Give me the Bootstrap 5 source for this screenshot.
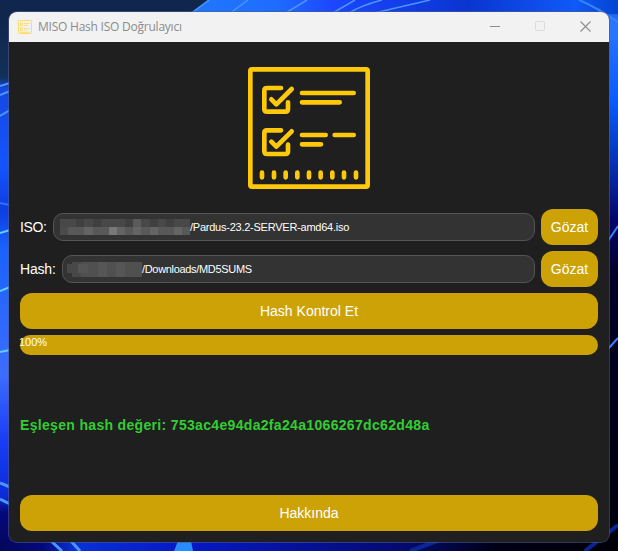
<!DOCTYPE html>
<html lang="tr">
<head>
<meta charset="utf-8">
<meta name="viewport" content="width=device-width, initial-scale=1">
<title>MISO Hash ISO Doğrulayıcı</title>
<link href="https://cdn.jsdelivr.net/npm/bootstrap@5.3.0/dist/css/bootstrap.min.css" rel="stylesheet">
<style>
  body { width: 618px; height: 551px; background: #02063a; font-family: "Liberation Sans", Arial, sans-serif; font-size: 14px; line-height: 1; padding: 12px 9px 9px; }
  .wallpaper { z-index: 0; }
  .app-window { z-index: 1; width: 600px; height: 530px; background: #1f1f1f; border-radius: 8px; box-shadow: 0 0 0 1px rgba(80,90,130,.6); }
  .title-bar { height: 30px; background: #f2f2f2; color: #8c8c8c; font-family: "Open Sans", "Noto Sans", sans-serif; font-size: 12px; padding-left: 9px; padding-right: 18px; }
  .title-group { gap: 6px; }
  .title-text { letter-spacing: -.23px; }
  .win-controls { gap: 35px; }
  .content { padding: 25px 11px 11px; }
  .logo { margin-bottom: 20px; }
  .form-line { gap: 6px; height: 36px; margin-bottom: 6px; color: #fff; }
  .iso-label { width: 27px; letter-spacing: -.35px; }
  .hash-label { width: 36px; letter-spacing: -.2px; }
  .path-box { height: 28px; background: #333; border: 1px solid #555; border-radius: 10px; color: #fff; font-size: 11px; }
  .iso-path { letter-spacing: -.24px; }
  .hash-path { letter-spacing: -.32px; }
  .gold-btn, .gold-btn:hover { height: 36px; background: #cca207; border: 0; border-radius: 12px; color: #fff; font-size: 14px; line-height: 1; padding: 0; }
  .browse { width: 57px; }
  .gold-progress { height: 20px; margin-top: 6px; border-radius: 10px; background: #cca207; color: #fff; font-size: 11px; padding-top: 2px; }
  .percent { margin-left: -1px; }
  .result { color: #32cd32; font-size: 14px; }
  .result-text { letter-spacing: .325px; }
</style>
</head>
<body class="position-relative overflow-hidden">
<svg class="wallpaper position-absolute top-0 start-0" width="618" height="551" viewBox="0 0 618 551" aria-hidden="true">
  <defs>
    <linearGradient id="leftGlow" x1="0" y1="0" x2="0" y2="1">
      <stop offset="0" stop-color="#102349"/><stop offset=".14" stop-color="#123058"/><stop offset=".16" stop-color="#1448e0"/>
      <stop offset=".3" stop-color="#1554ff"/><stop offset=".38" stop-color="#0c3de0"/><stop offset=".45" stop-color="#1a62ff"/>
      <stop offset=".68" stop-color="#3c6dff"/><stop offset=".8" stop-color="#1a3cf6"/><stop offset=".9" stop-color="#0a2cd8"/><stop offset=".93" stop-color="#04087c"/><stop offset="1" stop-color="#04065c"/>
    </linearGradient>
    <linearGradient id="rightGlow" x1="0" y1="0" x2="0" y2="1">
      <stop offset="0" stop-color="#0444c8"/><stop offset=".04" stop-color="#2c74ff"/><stop offset=".18" stop-color="#0a5cff"/>
      <stop offset=".3" stop-color="#0530b0"/><stop offset=".4" stop-color="#04056a"/><stop offset=".5" stop-color="#010128"/><stop offset="1" stop-color="#00000a"/>
    </linearGradient>
    <linearGradient id="topGlow"><stop offset="0" stop-color="#2078fa"/><stop offset=".2" stop-color="#1f6cff"/><stop offset=".34" stop-color="#1c45ff"/><stop offset=".65" stop-color="#0a35d0"/><stop offset=".9" stop-color="#105af8"/><stop offset="1" stop-color="#0444d0"/></linearGradient>
    <linearGradient id="bottomGlow"><stop offset="0" stop-color="#04065c"/><stop offset=".07" stop-color="#04087c"/><stop offset=".12" stop-color="#0830d8"/><stop offset=".3" stop-color="#0618c8"/><stop offset=".65" stop-color="#040a70"/><stop offset=".8" stop-color="#000018"/><stop offset="1" stop-color="#000008"/></linearGradient>
  </defs>
  <rect width="300" height="551" fill="url(#leftGlow)"/>
  <rect width="300" height="20" fill="#10264c"/>
  <rect x="300" width="318" height="551" fill="url(#rightGlow)"/>
  <path d="M190 14 209 0H618V14Z" fill="url(#topGlow)"/>
  <path d="M598 8Q608 14 618 22V40H598Z" fill="#2c74ff"/>
  <rect y="541" width="618" height="10" fill="url(#bottomGlow)"/>
  <g fill="none" stroke="#4b96ff" stroke-width="2">
    <path d="M190 14 209 0M229 14 248 0M284 14 307 0M331 14 355 0M347 14Q362 5 382 0M370 14 430 0" stroke-width="1.500"/>
    <path d="M0 86 10 83M0 95 10 91M0 116 10 110"/>
    <path d="M0 203 10 205" stroke="#2f70ff"/>
    <path d="M0 233 10 230M0 291 10 287M0 352 10 350" stroke="#5ccfff"/>
    <path d="M0 483 10 487M0 499 10 504M50 540 62 551M70 540 80 551" stroke-width="3"/>
    <path d="M579 0Q596 7 618 22M608 241 618 226M608 349 618 338" stroke="#3683ff"/>
    <path d="M410 551 440 540M585 551 618 525" stroke="#0a2595" stroke-width="4"/>
  </g>
  <path d="M174 551 178 541H191L193 551Z" fill="#268cff"/>
</svg>

<main class="app-window position-relative d-flex flex-column overflow-hidden">
  <header class="title-bar d-flex align-items-center justify-content-between flex-shrink-0">
    <div class="title-group d-flex align-items-center">
      <svg width="14" height="14" viewBox="0 0 14 14" fill="none" stroke="#ffdb68" aria-hidden="true"><rect x=".5" y=".5" width="13" height="13" rx="1"/><path d="M2.500 3h2v2.500h-2zM2.500 8h2v2.500h-2zM6 3.500h6M6 5.500h4M6 8.500h3M10 8.500h2M6 10h3M2 12.300h10" stroke-width=".9"/></svg>
      <span class="title-text text-nowrap">MISO Hash ISO Doğrulayıcı</span>
    </div>
    <div class="win-controls d-flex align-items-center">
      <svg width="10" height="12" viewBox="0 0 10 12" aria-label="Simge durumuna küçült"><path d="M0 5.500h10" stroke="#8c8c8c"/></svg>
      <svg width="10" height="12" viewBox="0 0 10 12" aria-label="Ekranı kapla"><rect x=".5" y=".5" width="9" height="9" rx="1" fill="none" stroke="#dcdcdc"/></svg>
      <svg width="11" height="12" viewBox="0 0 11 12" aria-label="Kapat"><path d="m.5.500 10 10M10.500.500l-10 10" stroke="#8c8c8c" stroke-width="1.100"/></svg>
    </div>
  </header>

  <div class="content d-flex flex-column flex-grow-1">
    <svg class="logo align-self-center flex-shrink-0" width="122" height="122" viewBox="42 36 366 366" fill="none" stroke="#ffc90b" stroke-width="14" stroke-linecap="round" stroke-linejoin="round" aria-hidden="true">
      <rect x="49" y="43" width="352" height="352" rx="5"/>
      <g id="task"><path d="M141 99H99Q91 99 91 107V162Q91 170 99 170H154Q162 170 162 162V142"/><path d="M112 133 127 148 173 102"/></g>
      <use href="#task" y="127"/>
      <path d="M204 114H359M204 142H317M204 240H275M302 240H359M204 268H261"/>
      <path d="M84 353v14M120 353v14M155 353v14M190 353v14M225 353v14M260 353v14M295 353v14M330 353v14M366 353v14"/>
    </svg>

    <div class="form-line d-flex align-items-center">
      <span class="iso-label flex-shrink-0">ISO:</span>
      <div class="path-box d-flex align-items-center flex-grow-1" style="padding-left:6px">
        <svg width="130" height="16" viewBox="0 0 130 16" shape-rendering="crispEdges" aria-hidden="true">
          <path fill="#484848" d="M0 0h130v8H0z"/><path fill="#585858" d="M0 8h130v8H0z"/>
          <path fill="#404040" d="M16 0h8v8h-8zM33 0h8v8h-8zM65 0h8v8h-8zM90 0h8v8h-8zM106 0h8v8h-8z"/>
          <path fill="#5a5a5a" d="M73 0h8v8h-8z"/><path fill="#646464" d="M24 8h9v8h-9zM57 8h8v8h-8zM73 8h8v8h-8zM90 8h8v8h-8zM114 8h8v8h-8z"/>
          <path fill="#787878" d="M49 8h8v8h-8z"/><path fill="#4b4b4b" d="M0 8h8v8H0z"/>
        </svg><span class="iso-path text-nowrap">/Pardus-23.2-SERVER-amd64.iso</span>
      </div>
      <button type="button" class="btn gold-btn browse">Gözat</button>
    </div>

    <div class="form-line d-flex align-items-center">
      <span class="hash-label flex-shrink-0">Hash:</span>
      <div class="path-box d-flex align-items-center flex-grow-1" style="padding-left:4px">
        <svg width="75" height="15" viewBox="0 0 75 15" shape-rendering="crispEdges" aria-hidden="true">
          <path fill="#484848" d="M0 2h5V0h9v15H5v-4H0z"/><path fill="#505050" d="M14 0h61v15H14z"/><path fill="#555" d="M11 2h10v9H11z"/>
          <path fill="#565656" d="M31 0h9v15h-9zM49 0h9v15h-9z"/>
        </svg><span class="hash-path text-nowrap">/Downloads/MD5SUMS</span>
      </div>
      <button type="button" class="btn gold-btn browse">Gözat</button>
    </div>

    <button type="button" class="btn gold-btn w-100 flex-shrink-0">Hash Kontrol Et</button>
    <div class="gold-progress flex-shrink-0" role="progressbar" aria-valuenow="100" aria-valuemin="0" aria-valuemax="100"><span class="percent">100%</span></div>
    <div class="result fw-bold d-flex align-items-center flex-grow-1"><span class="result-text text-nowrap">Eşleşen hash değeri: 753ac4e94da2fa24a1066267dc62d48a</span></div>
    <button type="button" class="btn gold-btn w-100 flex-shrink-0">Hakkında</button>
  </div>
</main>
<script src="https://cdn.jsdelivr.net/npm/bootstrap@5.3.0/dist/js/bootstrap.bundle.min.js"></script>
</body>
</html>
